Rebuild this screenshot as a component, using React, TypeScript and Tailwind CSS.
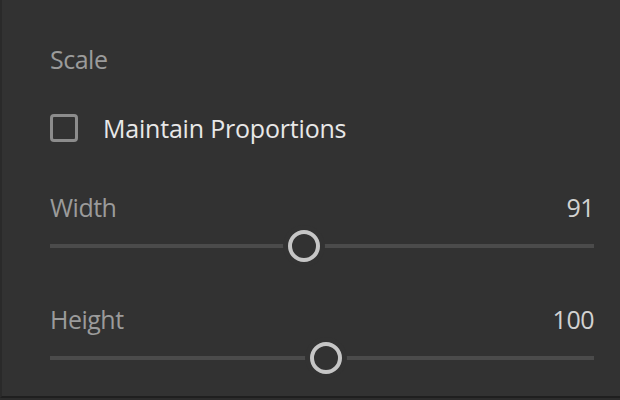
import React from "react";

const font = { fontFamily: '"Open Sans", "Noto Sans", sans-serif' };

interface SliderRowProps {
  label: string;
  value: number;
  pos: number;
  className?: string;
}

function SliderRow({ label, value, pos, className }: SliderRowProps) {
  return (
    <div className={className}>
      <div className="flex justify-between h-[32px] leading-[32px] text-[25px] tracking-[-0.5px]">
        <span className="text-[#9b9b9b]">{label}</span>
        <span className="text-[#d2d2d2]">{value}</span>
      </div>
      <div className="relative mt-[7px] h-[32px] flex items-center">
        <div className="w-full h-[4px] bg-[#4b4b4b]" />
        <div
          className="absolute top-0 w-[32px] h-[32px] -translate-x-1/2 rounded-full border-[4px] border-[#c6c6c6] bg-[#323232] shadow-[0_0_0_5px_#323232]"
          style={{ left: `${pos}%` }}
        />
      </div>
    </div>
  );
}

export default function App() {
  return (
    <div className="w-[620px] h-[400px] bg-[#2c2c2c] pb-[2px]" style={font}>
      <div className="h-full bg-[#323232] border-l-2 border-b-2 border-l-[#2a2a2a] border-b-[#1f1f1f] pl-[48px] pr-[26px] pt-[43px]">
        <div className="h-[32px] leading-[32px] text-[25px] tracking-[-0.5px] text-[#9b9b9b]">Scale</div>

        <label className="mt-[37px] h-[32px] flex items-center gap-[25px]">
          <span className="w-[28px] h-[28px] rounded-[4px] border-[3px] border-[#8c8c8c]" />
          <span className="leading-[32px] text-[25px] font-medium tracking-[-0.2px] text-[#e8e8e8]">Maintain Proportions</span>
        </label>

        <SliderRow label="Width" value={91} pos={46.6} className="mt-[47px]" />
        <SliderRow label="Height" value={100} pos={50.7} className="mt-[41px]" />
      </div>
    </div>
  );
}
